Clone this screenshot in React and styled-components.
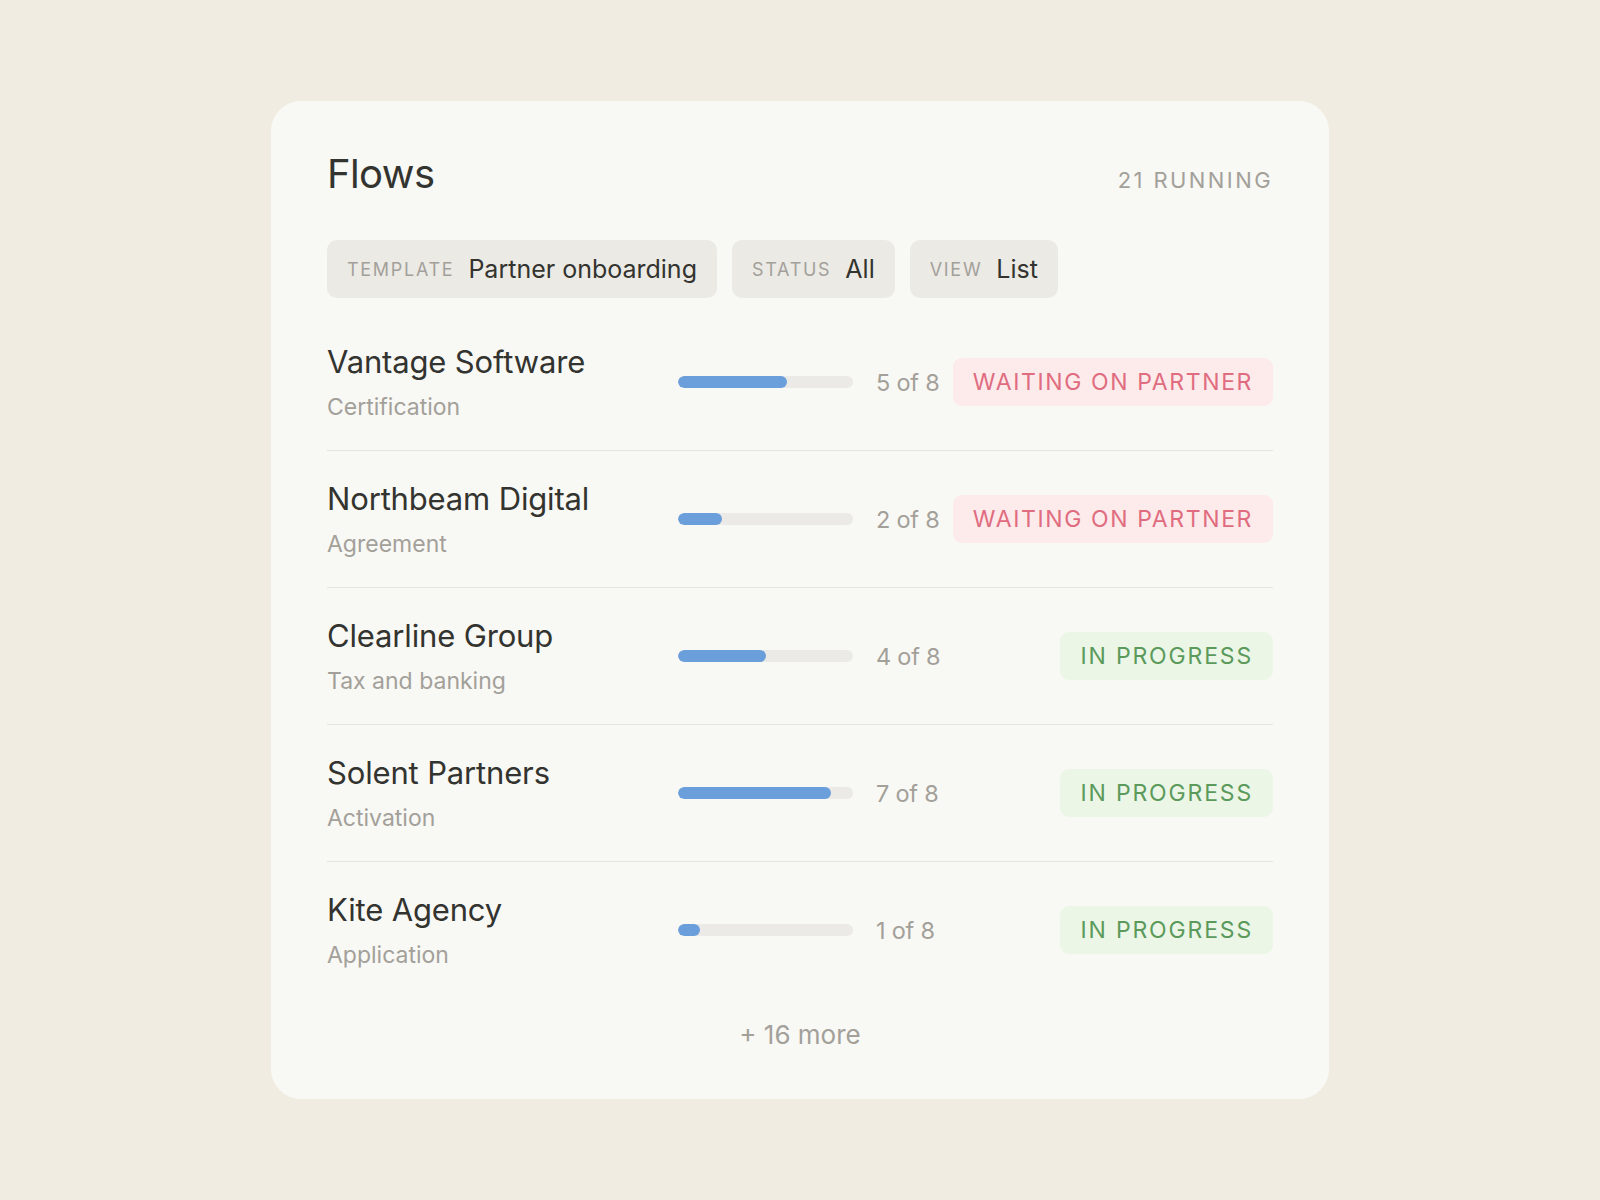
import styled, { createGlobalStyle } from "styled-components";

const GlobalStyle = createGlobalStyle`
  body {
    margin: 0;
    background: #f1ece1;
    font-family: Inter, "Noto Sans", sans-serif;
  }
`;

const Page = styled.div`
  min-height: 1200px;
  display: flex;
  align-items: center;
  justify-content: center;
`;

const Card = styled.div`
  width: 1058px;
  box-sizing: border-box;
  padding: 48px 56px;
  background: #f8f8f4;
  border-radius: 30px;
`;

const Header = styled.div`
  display: flex;
  justify-content: space-between;
  align-items: baseline;
  margin-bottom: 41px;
`;

const Title = styled.h1`
  margin: 0;
  font-size: 40px;
  line-height: 1.25;
  font-weight: 400;
  color: #33332f;
  letter-spacing: -0.015em;
`;

const Running = styled.div`
  font-size: 22px;
  letter-spacing: 0.11em;
  color: #a3a09a;
`;

const Filters = styled.div`
  display: flex;
  gap: 15px;
  margin-bottom: 16px;
`;

const Chip = styled.div`
  display: flex;
  align-items: center;
  gap: 14px;
  height: 58px;
  padding: 0 20px 0 20px;
  background: #ebeae5;
  border-radius: 10px;
`;

const ChipLabel = styled.span`
  font-size: 18px;
  letter-spacing: 0.095em;
  color: #a3a09a;
`;

const ChipValue = styled.span`
  font-size: 25px;
  color: #33332f;
`;

const Row = styled.div`
  display: flex;
  align-items: center;
  height: 136px;
  border-bottom: 1px solid #e6e4df;
  &:last-of-type {
    border-bottom: none;
  }
`;

const NameBlock = styled.div`
  flex: 1;
  display: flex;
  flex-direction: column;
  gap: 14px;
`;

const Name = styled.div`
  font-size: 31px;
  line-height: 1.2;
  letter-spacing: -0.005em;
  color: #33332f;
`;

const Sub = styled.div`
  font-size: 23px;
  line-height: 1.2;
  color: #a3a09a;
`;

const Track = styled.div`
  width: 175px;
  height: 12px;
  border-radius: 6px;
  background: #ebeae6;
  margin-right: 23px;
  overflow: hidden;
`;

const Fill = styled.div`
  height: 100%;
  border-radius: 6px;
  background: #6a9fdc;
`;

const Count = styled.div`
  width: 61px;
  margin-right: 16px;
  font-size: 23.5px;
  letter-spacing: -0.01em;
  color: #a3a09a;
  white-space: nowrap;
`;

const BadgeSlot = styled.div`
  width: 320px;
  display: flex;
  justify-content: flex-end;
`;

const Badge = styled.div`
  height: 48px;
  display: flex;
  align-items: center;
  padding: 0 20px;
  border-radius: 9px;
  font-size: 23px;
  white-space: nowrap;
  letter-spacing: ${(p) => (p.waiting ? "0.07em" : "0.08em")};
  color: ${(p) => (p.waiting ? "#e06c80" : "#5c9a5c")};
  background: ${(p) => (p.waiting ? "#fdeaea" : "#ebf6e6")};
`;

const More = styled.div`
  margin-top: 21px;
  text-align: center;
  font-size: 26px;
  line-height: 32px;
  color: #a3a09a;
`;

const flows = [
  { name: "Vantage Software", step: "Certification", done: 5, waiting: true },
  { name: "Northbeam Digital", step: "Agreement", done: 2, waiting: true },
  { name: "Clearline Group", step: "Tax and banking", done: 4, waiting: false },
  { name: "Solent Partners", step: "Activation", done: 7, waiting: false },
  { name: "Kite Agency", step: "Application", done: 1, waiting: false },
];

export default function App() {
  return (
    <>
      <GlobalStyle />
      <Page>
        <Card>
          <Header>
            <Title>Flows</Title>
            <Running>21 RUNNING</Running>
          </Header>
          <Filters>
            <Chip>
              <ChipLabel>TEMPLATE</ChipLabel>
              <ChipValue>Partner onboarding</ChipValue>
            </Chip>
            <Chip>
              <ChipLabel>STATUS</ChipLabel>
              <ChipValue>All</ChipValue>
            </Chip>
            <Chip>
              <ChipLabel>VIEW</ChipLabel>
              <ChipValue>List</ChipValue>
            </Chip>
          </Filters>
          <div>
            {flows.map((f) => (
              <Row key={f.name}>
                <NameBlock>
                  <Name>{f.name}</Name>
                  <Sub>{f.step}</Sub>
                </NameBlock>
                <Track>
                  <Fill style={{ width: `${(f.done / 8) * 100}%` }} />
                </Track>
                <Count>{f.done} of 8</Count>
                <BadgeSlot>
                  <Badge waiting={f.waiting}>
                    {f.waiting ? "WAITING ON PARTNER" : "IN PROGRESS"}
                  </Badge>
                </BadgeSlot>
              </Row>
            ))}
          </div>
          <More>+ 16 more</More>
        </Card>
      </Page>
    </>
  );
}
